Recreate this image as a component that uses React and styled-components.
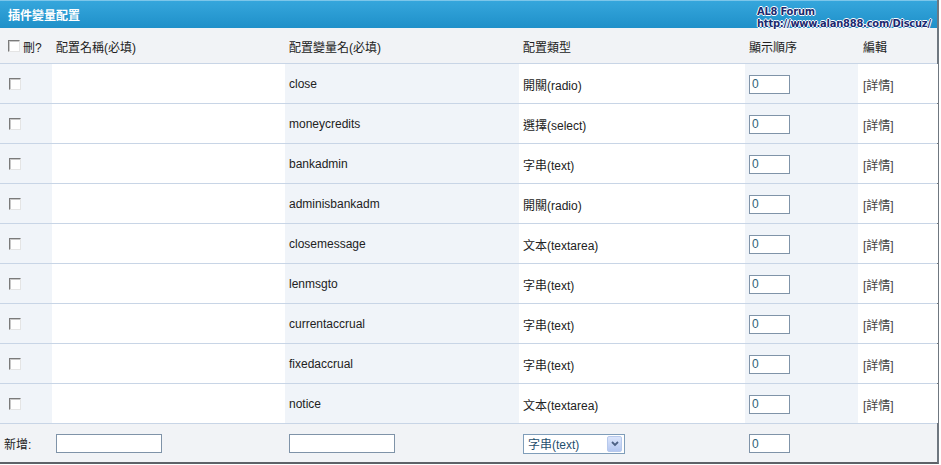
import React from "react";
import styled, { createGlobalStyle } from "styled-components";

const Global = createGlobalStyle`
  html, body { margin: 0; padding: 0; background: #fff; }
  body { font-family: "Liberation Sans", "Noto Sans CJK TC", sans-serif; font-size: 12px; color: #222; }
`;

const COLS = "52px 233px 234px 226px 113px 80px";

const Wrap = styled.div`
  position: relative;
  width: 939px;
  border-right: 2px solid #6f7780;
  border-bottom: 2px solid #5d6268;
  box-sizing: border-box;
`;

const TitleBar = styled.div`
  height: 28px;
  box-sizing: border-box;
  border-top: 1px solid #7cc6ea;
  background: linear-gradient(#35a6dc, #1f90c9);
  display: flex;
  align-items: center;
  padding-left: 8px;
  color: #fff;
  font-weight: bold;
  font-size: 12px;
  font-family: "Noto Sans CJK TC", sans-serif;
`;

const Watermark = styled.div`
  position: absolute;
  left: 757px;
  top: 6px;
  font-family: "DejaVu Sans Condensed", "DejaVu Sans", sans-serif;
  font-weight: bold;
  font-size: 11px;
  line-height: 12px;
  color: #1c2a70;
  text-shadow: 1px 0 0 #fff, -1px 0 0 #fff, 0 1px 0 #fff, 0 -1px 0 #fff;
  letter-spacing: -0.2px;
  white-space: nowrap;
`;

const Line = styled.div`
  height: 12px;
`;

const Row = styled.div`
  display: grid;
  grid-template-columns: ${COLS};
  height: ${(p) => p.$h}px;
  box-sizing: border-box;
  border-bottom: ${(p) => (p.$last ? "none" : "1px solid #c8d5e6")};
  background: ${(p) => (p.$head ? "#f1f3f6" : "transparent")};
`;

const Cell = styled.div`
  display: flex;
  align-items: center;
  padding-left: ${(p) => p.$pl ?? 4}px;
  padding-top: 1px;
  background: ${(p) => (p.$alt ? "#f0f4f9" : p.$head ? "transparent" : "#fff")};
  white-space: nowrap;
  font-family: "Liberation Sans", "Noto Sans CJK TC", sans-serif;
`;

const Check = styled.span`
  display: inline-block;
  width: 10px;
  height: 10px;
  border-top: 1px solid #7a7a7a;
  border-left: 1px solid #7a7a7a;
  border-right: 1px solid #e4e4e4;
  border-bottom: 1px solid #e4e4e4;
  background: #fff;
  margin-right: ${(p) => (p.$mr ? 3 : 0)}px;
  box-shadow: inset 1px 1px 0 #c8c8c8;
`;

const Input = styled.div`
  width: ${(p) => p.$w}px;
  height: 19px;
  box-sizing: border-box;
  border: 1px solid #7f93a8;
  background: #fff;
  color: #2f5f77;
  font-size: 12px;
  display: flex;
  align-items: center;
  padding-left: 2px;
`;

const Select = styled.div`
  width: 102px;
  height: 20px;
  box-sizing: border-box;
  border: 1px solid #7f9db9;
  background: #fff;
  display: flex;
  align-items: center;
  justify-content: space-between;
  padding: 0 2px 0 4px;
  color: #1f4f6e;
  font-family: "Liberation Sans", "Noto Sans CJK TC", sans-serif;
`;

const DropBtn = styled.span`
  width: 15px;
  height: 16px;
  box-sizing: border-box;
  border: 1px solid #b7c9ec;
  border-radius: 2px;
  background: linear-gradient(#dbe5fb, #b4c7f1);
  display: flex;
  align-items: center;
  justify-content: center;
`;

const Edit = styled.span`
  color: #444;
`;

const rows = [
  ["close", "開關(radio)"],
  ["moneycredits", "選擇(select)"],
  ["bankadmin", "字串(text)"],
  ["adminisbankadm", "開關(radio)"],
  ["closemessage", "文本(textarea)"],
  ["lenmsgto", "字串(text)"],
  ["currentaccrual", "字串(text)"],
  ["fixedaccrual", "字串(text)"],
  ["notice", "文本(textarea)"],
];

export default function App() {
  return (
    <>
      <Global />
      <Wrap>
        <TitleBar>插件變量配置</TitleBar>
        <Watermark>
          <Line>AL8 Forum</Line>
          <Line>http://www.alan888.com/Discuz/</Line>
        </Watermark>
        <Row $h={36} $head>
          <Cell $head $pl={8}>
            <Check $mr />刪?
          </Cell>
          <Cell $head>配置名稱(必填)</Cell>
          <Cell $head>配置變量名(必填)</Cell>
          <Cell $head>配置類型</Cell>
          <Cell $head>顯示順序</Cell>
          <Cell $head $pl={5}>編輯</Cell>
        </Row>
        {rows.map(([name, type]) => (
          <Row key={name} $h={40}>
            <Cell $alt $pl={9}>
              <Check />
            </Cell>
            <Cell />
            <Cell $alt>{name}</Cell>
            <Cell>{type}</Cell>
            <Cell $alt>
              <Input $w={41}>0</Input>
            </Cell>
            <Cell $pl={5}>
              <Edit>[詳情]</Edit>
            </Cell>
          </Row>
        ))}
        <Row $h={38} $head $last>
          <Cell $head $pl={4}>新增:</Cell>
          <Cell $head>
            <Input $w={106} />
          </Cell>
          <Cell $head>
            <Input $w={106} />
          </Cell>
          <Cell $head>
            <Select>
              字串(text)
              <DropBtn>
                <svg width="8" height="6" viewBox="0 0 8 6">
                  <path d="M1 1 L4 4 L7 1" stroke="#4d6185" strokeWidth="1.8" fill="none" />
                </svg>
              </DropBtn>
            </Select>
          </Cell>
          <Cell $head>
            <Input $w={41}>0</Input>
          </Cell>
          <Cell $head />
        </Row>
      </Wrap>
    </>
  );
}
